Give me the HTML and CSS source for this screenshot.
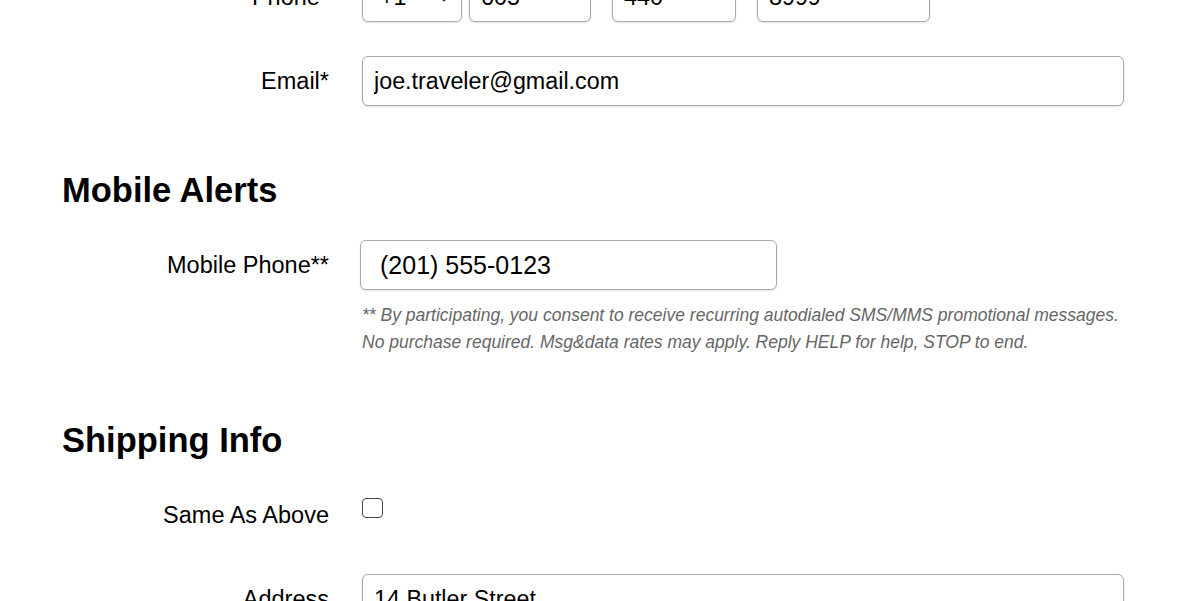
FILE: index.html
```html
<!DOCTYPE html>
<html lang="en">
<head>
    <meta charset="UTF-8">
    <meta name="viewport" content="width=device-width, initial-scale=1.0">
    <title>Contact Info</title>
    <link rel="stylesheet" href="styles.css">
</head>
<body>
    <form class="container" id="contactForm">
        <div class="form-row">
            <label for="phoneArea">Phone*</label>
            <div class="phone-group">
                <div class="select-wrap">
                    <select id="phoneCountry" name="phoneCountry">
                        <option>+1</option>
                    </select>
                    <svg class="chevron" width="12" height="8" viewBox="0 0 12 8"><path d="M1 1.5l5 5 5-5" fill="none" stroke="#333" stroke-width="1.8"/></svg>
                </div>
                <input type="text" class="phone-area" id="phoneArea" value="605">
                <input type="text" class="phone-prefix" value="440">
                <input type="text" class="phone-line" value="8999">
            </div>
        </div>

        <div class="form-row">
            <label for="email">Email*</label>
            <input type="text" id="email" name="email" value="joe.traveler@gmail.com">
        </div>

        <h2>Mobile Alerts</h2>
        <div class="form-row">
            <label for="mobilePhone">Mobile Phone**</label>
            <input type="text" class="mobile-input" id="mobilePhone" name="mobilePhone" value="(201) 555-0123">
        </div>
        <div class="form-row note-row">
            <span></span>
            <p class="note">** By participating, you consent to receive recurring autodialed SMS/MMS promotional messages. No purchase required. Msg&amp;data rates may apply. Reply HELP for help, STOP to end.</p>
        </div>

        <h2>Shipping Info</h2>
        <div class="form-row">
            <label for="sameAsAbove">Same As Above</label>
            <input type="checkbox" id="sameAsAbove" name="sameAsAbove">
        </div>
        <div class="form-row">
            <label for="address">Address</label>
            <input type="text" id="address" name="address" value="14 Butler Street">
        </div>
    </form>
</body>
</html>
```

FILE: styles.css
```css
body {
    font-family: "Liberation Sans", Arial, sans-serif;
    margin: 0;
    background-color: white;
    color: #000;
}
.container {
    width: 1062px;
    padding-left: 62px;
    margin-top: -28px;
}
.form-row {
    display: grid;
    grid-template-columns: 267px 1fr;
    column-gap: 33px;
    align-items: center;
    height: 50px;
    margin-bottom: 34px;
}
.form-row label {
    text-align: right;
    font-size: 23.5px;
    color: #000;
}
input[type="text"], select {
    height: 50px;
    box-sizing: border-box;
    border: 1px solid #a9a9a9;
    border-radius: 6px;
    box-shadow: 0 1px 2px rgba(0, 0, 0, 0.12);
    font-family: inherit;
    font-size: 23.3px;
    color: #000;
    padding: 0 11px;
    background-color: white;
    outline: none;
}
input[type="text"] {
    width: 100%;
}
.phone-group {
    display: flex;
    align-items: center;
}
.select-wrap {
    position: relative;
    width: 100px;
    margin-right: 7px;
}
.select-wrap select {
    -webkit-appearance: none;
    appearance: none;
    width: 100%;
    padding-left: 17px;
}
.chevron {
    position: absolute;
    left: 76px;
    top: 22px;
}
.phone-group .phone-area {
    width: 122px;
    margin-right: 21px;
}
.phone-group .phone-prefix {
    width: 124px;
    margin-right: 21px;
}
.phone-group .phone-line {
    width: 173px;
}
.mobile-input {
    margin-left: -2px;
    max-width: 417px;
    font-size: 25px !important;
    padding-left: 19px !important;
}
h2 {
    font-size: 34.5px;
    line-height: 40px;
    font-weight: bold;
    color: #000;
    margin: 64px 0 30px;
}
.note-row {
    height: auto;
    margin-top: -22px;
    margin-bottom: 0;
}
.note {
    margin: 0;
    font-size: 17.5px;
    line-height: 27px;
    font-style: italic;
    color: #666;
}
input[type="checkbox"] {
    -webkit-appearance: none;
    appearance: none;
    align-self: start;
    width: 21px;
    height: 20px;
    margin: 8px 0 0;
    border: 1.5px solid #444;
    border-radius: 4px;
    background-color: white;
}
```
